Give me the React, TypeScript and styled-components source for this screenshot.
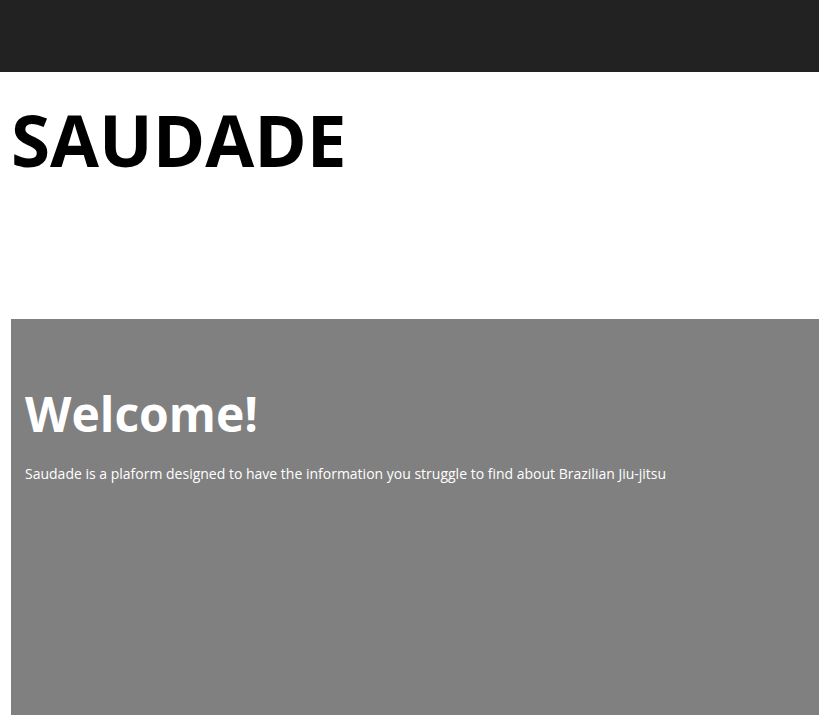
import React from "react";
import styled, { createGlobalStyle } from "styled-components";

const Global = createGlobalStyle`
  html, body { margin: 0; padding: 0; background: #fff; overflow: hidden; }
  body { font-family: "Open Sans", "Noto Sans", sans-serif; }
`;

const TopBar = styled.header`
  height: 72px;
  background: #222222;
`;

const TitleArea = styled.section`
  height: 247px;
  padding-left: 11px;
  box-sizing: border-box;
`;

const Title = styled.h1`
  margin: 0;
  padding-top: 25px;
  font-size: 71px;
  line-height: 1.2;
  font-weight: 700;
  color: #000;
`;

const Panel = styled.main`
  margin-left: 11px;
  height: 396px;
  background: #808080;
  padding: 64px 14px 0;
  box-sizing: border-box;
  color: #fff;
`;

const Heading = styled.h2`
  margin: 0;
  font-size: 48px;
  line-height: 1.3;
  font-weight: 700;
`;

const Text = styled.p`
  margin: 18px 0 0;
  font-size: 14px;
  line-height: 1.5;
`;

export default function App() {
  return (
    <>
      <Global />
      <TopBar />
      <TitleArea>
        <Title>SAUDADE</Title>
      </TitleArea>
      <Panel>
        <Heading>Welcome!</Heading>
        <Text>
          Saudade is a plaform designed to have the information you struggle to find about Brazilian Jiu-jitsu
        </Text>
      </Panel>
    </>
  );
}
